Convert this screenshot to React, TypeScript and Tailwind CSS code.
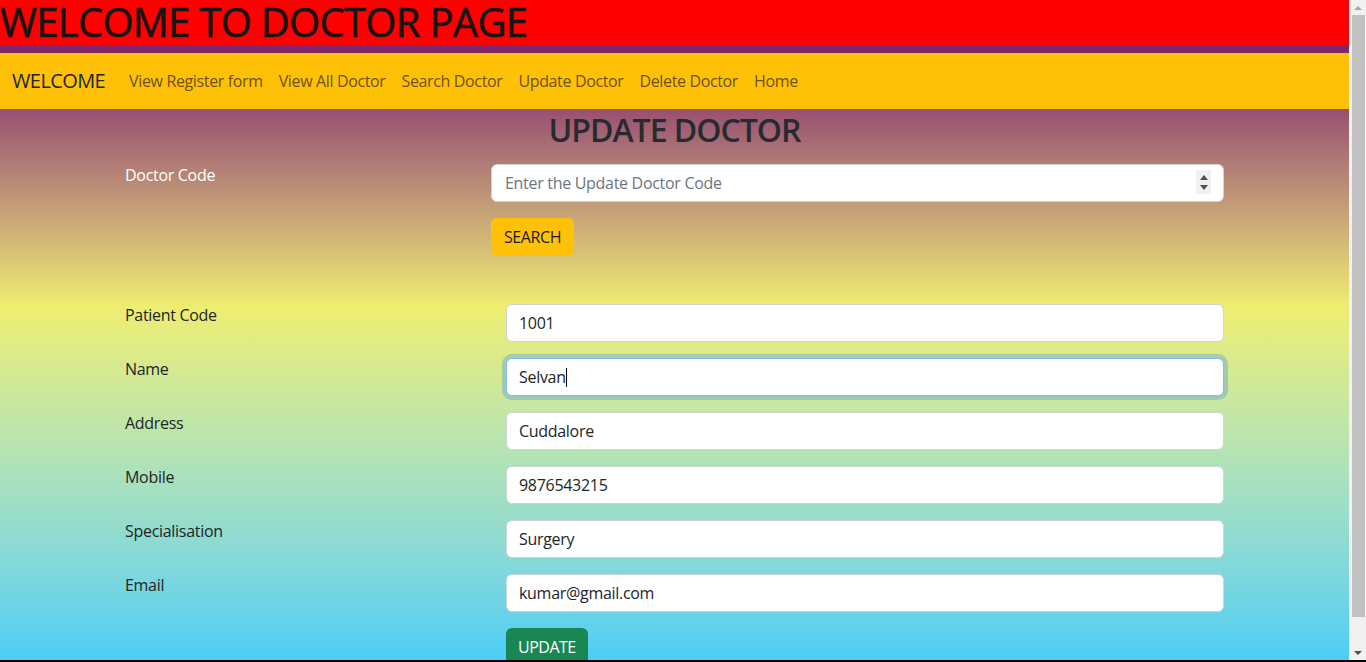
import React from 'react';

const font = { fontFamily: '"Open Sans", "Noto Sans", sans-serif' };

const fields = [
    { label: 'Patient Code', value: '1001' },
    { label: 'Name', value: 'Selvan', focused: true },
    { label: 'Address', value: 'Cuddalore' },
    { label: 'Mobile', value: '9876543215' },
    { label: 'Specialisation', value: 'Surgery' },
    { label: 'Email', value: 'kumar@gmail.com' },
];

const links = ['View Register form', 'View All Doctor', 'Search Doctor', 'Update Doctor', 'Delete Doctor', 'Home'];

const App = () => {
    return (
        <div className="h-[662px] flex flex-col overflow-hidden bg-black" style={font}>
            <div className="flex flex-1 min-h-0">
                <div className="flex-1 flex flex-col min-w-0 min-h-0">
                    <div className="h-[45px] shrink-0 bg-[#ff0000]">
                        <h1 className="text-[40px] leading-[44px] text-[#151515] tracking-[-0.7px] [-webkit-text-stroke:0.6px_#151515] whitespace-nowrap">WELCOME TO DOCTOR PAGE</h1>
                    </div>
                    <div className="h-[8px] shrink-0 bg-[#7f2869]" />
                    <nav className="h-[56px] shrink-0 bg-[#ffc107] flex items-center px-3">
                        <span className="text-[20px] text-[#212529] mr-4 tracking-[-0.6px]">WELCOME</span>
                        <ul className="flex">
                            {links.map((l) => (
                                <li key={l} className="px-2 text-[16px] text-[#6e5207] tracking-[-0.36px] whitespace-nowrap">{l}</li>
                            ))}
                        </ul>
                    </nav>
                    <main className="flex-1 min-h-0 overflow-hidden bg-gradient-to-b from-[#985070] via-[#eeee70] via-[36%] to-[#4ccdf6]">
                        <h2 className="text-center text-[32px] font-semibold text-[#262b30] leading-[38px] mt-[2px] tracking-[-1px]">UPDATE DOCTOR</h2>

                        <div className="pl-[125px] pr-[125px] mt-[15px] flex">
                            <label className="w-[366px] text-white text-[16px] leading-6 -mt-[1px] tracking-[-0.3px]">Doctor Code</label>
                            <div className="flex-1">
                                <div className="relative">
                                    <input
                                        type="text"
                                        placeholder="Enter the Update Doctor Code"
                                        className="w-full h-[38px] bg-white border border-[#ced4da] rounded-[6px] px-[13px] text-[16px] text-[#212529] placeholder:text-[#6c757d] tracking-[-0.3px] outline-none"
                                    />
                                    <div className="absolute right-[13px] top-[6px] w-[15px] h-[24px] bg-[#f0f0f0] flex flex-col items-center justify-center gap-[5px]">
                                        <svg width="8" height="5" viewBox="0 0 8 5"><path d="M0 5 L4 0 L8 5 Z" fill="#505050" /></svg>
                                        <svg width="8" height="5" viewBox="0 0 8 5"><path d="M0 0 L8 0 L4 5 Z" fill="#505050" /></svg>
                                    </div>
                                </div>
                                <button className="mt-[16px] h-[38px] px-[13px] bg-[#ffc107] rounded-[6px] text-[16px] text-[#1a1a1a] tracking-[-0.4px]">SEARCH</button>
                            </div>
                        </div>

                        <div className="pl-[125px] pr-[125px] mt-[48px] flex flex-col gap-4">
                            {fields.map((f) => (
                                <div key={f.label} className="flex">
                                    <label className="w-[381px] text-[#212529] text-[16px] leading-6 -mt-[1px] tracking-[-0.3px]">{f.label}</label>
                                    {f.focused ? (
                                        <div className="flex-1 h-[38px] bg-white border border-[#86b7fe] rounded-[6px] px-[12px] flex items-center text-[16px] text-[#212529] tracking-[-0.3px] shadow-[0_0_0_4px_rgba(13,110,253,0.25)]">
                                            {f.value}
                                            <span className="inline-block w-px h-[19px] bg-black" />
                                        </div>
                                    ) : (
                                        <input
                                            type="text"
                                            defaultValue={f.value}
                                            className="flex-1 h-[38px] bg-white border border-[#ced4da] rounded-[6px] px-[12px] text-[16px] text-[#212529] tracking-[-0.3px] outline-none"
                                        />
                                    )}
                                </div>
                            ))}
                            <div className="flex">
                                <div className="w-[381px]" />
                                <button className="h-[38px] px-[12px] bg-[#198754] rounded-[6px] text-[16px] text-white tracking-[-0.5px]">UPDATE</button>
                            </div>
                        </div>
                    </main>
                </div>
                <div className="w-[17px] bg-[#f1f1f1] flex flex-col items-center">
                    <div className="h-[15px] flex items-center justify-center">
                        <svg width="8" height="4" viewBox="0 0 8 4"><path d="M0 4 L4 0 L8 4 Z" fill="#a3a3a3" /></svg>
                    </div>
                    <div className="w-[13px] h-[602px] bg-[#c1c1c1] ml-[2px]" />
                    <div className="flex-1 flex items-end justify-center pb-[5px]">
                        <svg width="8" height="4" viewBox="0 0 8 4"><path d="M0 0 L8 0 L4 4 Z" fill="#505050" /></svg>
                    </div>
                </div>
            </div>
            <div className="h-[2px] bg-black" />
        </div>
    );
}

export default App;
